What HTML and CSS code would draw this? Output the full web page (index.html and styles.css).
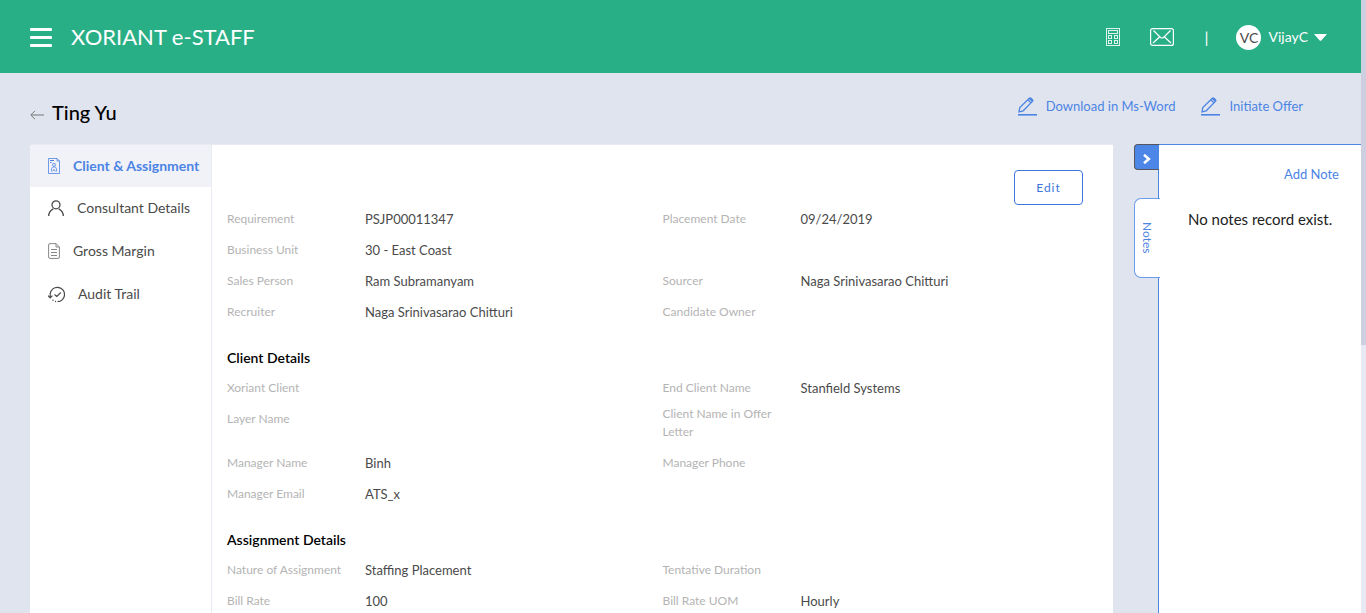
FILE: index.html
```html
<!DOCTYPE html>
<html lang="en">
<head>
<meta charset="utf-8">
<title>Xoriant e-Staff</title>
<link rel="stylesheet" href="styles.css">
</head>
<body>
<div class="page">
  <header class="topbar">
    <button class="menu-button" aria-label="Menu"><span></span><span></span><span></span></button>
    <a class="brand" href="#">XORIANT e-STAFF</a>
    <nav class="tools" aria-label="Tools">
      <a href="#" aria-label="Calculator">
        <svg width="14" height="18" viewBox="0 0 14 18" fill="none" stroke="currentColor" stroke-opacity=".85" shape-rendering="crispEdges"><path d="M.5.5h13v17H.5zM2.500 2.500h9v3h-9zM2.500 7.500h3v3h-3zM8.500 7.500h3v3h-3zM2.500 12.500h3v3h-3zM8.500 12.500h3v3h-3z"/></svg>
      </a>
      <a class="mail" href="#" aria-label="Mail">
        <svg width="24" height="18" viewBox="0 0 24 18" fill="none" stroke="currentColor" stroke-width="1.200"><rect x=".6" y=".6" width="22.800" height="16.800" rx="2"/><path d="M3.500 2.500l7 7q1.500 1 3 0l7-7M3 15l6.500-6M21 15l-6.500-6"/></svg>
      </a>
      <span class="divider">|</span>
      <button class="user">
        <span class="avatar">VC</span>
        <span>VijayC</span>
        <svg width="13" height="7" viewBox="0 0 13 7" fill="currentColor"><path d="M0 0h13L7.300 6.400q-.8.800-1.600 0z"/></svg>
      </button>
    </nav>
  </header>

  <div class="titlebar">
    <a class="back" href="#" aria-label="Back">
      <svg width="14" height="10" viewBox="0 0 14 10" fill="none" stroke="currentColor"><path d="M14 5H1M5 .8L.8 5 5 9.200"/></svg>
    </a>
    <h1>Ting Yu</h1>
    <div class="actions">
      <a href="#">
        <svg width="19" height="19" viewBox="0 0 19 19" fill="none" stroke="currentColor" stroke-width="1.300"><path d="M1 14.800l.8-4.300L11.300 1.300q.8-.7 1.600 0l1.500 1.500q.8.800 0 1.600L5.200 13.800zM9.800 2.800l3.100 3.100M11.500 1.500l2.700 2.700"/><path d="M0 17.800h19" stroke-width="1.600"/></svg>
        Download in Ms-Word</a>
      <a href="#">
        <svg width="19" height="19" viewBox="0 0 19 19" fill="none" stroke="currentColor" stroke-width="1.300"><path d="M1 14.800l.8-4.300L11.300 1.300q.8-.7 1.600 0l1.500 1.500q.8.800 0 1.600L5.200 13.800zM9.800 2.800l3.100 3.100M11.500 1.500l2.700 2.700"/><path d="M0 17.800h19" stroke-width="1.600"/></svg>
        Initiate Offer</a>
    </div>
  </div>

  <div class="content">
    <main class="card">
      <nav class="tabs" aria-label="Sections">
        <a class="active" href="#">
          <svg width="12" height="16" viewBox="0 0 12 16" fill="none" stroke="currentColor" stroke-width=".8"><path d="M.5.500h8.500l2.500 2.500v12.500H.5zM9 .5v2.500h2.500"/><circle cx="6" cy="6.800" r="1.500"/><path d="M3.300 13.500l.4-3.200q.3-1.300 2.300-1.500 2 .2 2.300 1.500l.4 3.200M4.600 13.500l1.400-2.200 1.400 2.200"/><path d="M2 2.500h4M2 4.500h1.500" stroke-width="1.200"/></svg>
          Client &amp; Assignment</a>
        <a href="#">
          <svg width="16" height="16" viewBox="0 0 16 16" fill="none" stroke="currentColor" stroke-width="1.300"><circle cx="8" cy="4.800" r="4"/><path d="M.7 16q0-4.800 4.600-7.200M15.300 16q0-4.800-4.600-7.200"/></svg>
          Consultant Details</a>
        <a href="#">
          <svg class="faint" width="12" height="16" viewBox="0 0 12 16" fill="none" stroke="currentColor"><path d="M2 .6h6l3.400 3.400v10q0 1.400-1.400 1.400H2Q.6 15.400.6 14V2Q.6.600 2 .6zM8 .6v3.400h3.400M3 6.500h6M3 9.500h6M3 12.500h6"/></svg>
          Gross Margin</a>
        <a href="#">
          <svg width="17" height="17" viewBox="0 0 17 17" fill="none" stroke="currentColor" stroke-width="1.200"><path d="M2.200 11.500V7.500A7.200 7.200 0 1 1 9.500 15.700M0 9.600l2.200 2.200 2.200-2.200M6.500 8.500l2.300 2 4-4M4.500 13.800l1 .8M7 15.400l1 .2"/></svg>
          Audit Trail</a>
      </nav>

      <div class="details">
        <div class="toolbar"><button class="edit">Edit</button></div>
        <section>
          <dl class="fields">
            <div><dt>Requirement</dt><dd>PSJP00011347</dd></div>
            <div><dt>Placement Date</dt><dd>09/24/2019</dd></div>
            <div><dt>Business Unit</dt><dd>30 - East Coast</dd></div>
            <div></div>
            <div><dt>Sales Person</dt><dd>Ram Subramanyam</dd></div>
            <div><dt>Sourcer</dt><dd>Naga Srinivasarao Chitturi</dd></div>
            <div><dt>Recruiter</dt><dd>Naga Srinivasarao Chitturi</dd></div>
            <div><dt>Candidate Owner</dt><dd></dd></div>
          </dl>
        </section>
        <section>
          <h2>Client Details</h2>
          <dl class="fields">
            <div><dt>Xoriant Client</dt><dd></dd></div>
            <div><dt>End Client Name</dt><dd>Stanfield Systems</dd></div>
            <div><dt>Layer Name</dt><dd></dd></div>
            <div class="two-line"><dt>Client Name in Offer Letter</dt><dd></dd></div>
            <div><dt>Manager Name</dt><dd>Binh</dd></div>
            <div><dt>Manager Phone</dt><dd></dd></div>
            <div><dt>Manager Email</dt><dd>ATS_x</dd></div>
            <div></div>
          </dl>
        </section>
        <section>
          <h2>Assignment Details</h2>
          <dl class="fields">
            <div><dt>Nature of Assignment</dt><dd>Staffing Placement</dd></div>
            <div><dt>Tentative Duration</dt><dd></dd></div>
            <div><dt>Bill Rate</dt><dd>100</dd></div>
            <div><dt>Bill Rate UOM</dt><dd>Hourly</dd></div>
          </dl>
        </section>
      </div>
    </main>

    <aside class="notes">
      <div class="handles">
        <button class="collapse" aria-label="Collapse notes">
          <svg width="8" height="10" viewBox="0 0 8 10" fill="none" stroke="currentColor" stroke-width="2.600"><path d="M1 .8L5.800 5 1 9.200"/></svg>
        </button>
        <button class="notes-tab">Notes</button>
      </div>
      <div class="notes-body">
        <a href="#">Add Note</a>
        <p>No notes record exist.</p>
      </div>
    </aside>
  </div>
</div>
<div class="scrollbar"><div class="thumb"></div></div>
</body>
</html>
```

FILE: styles.css
```css
* { box-sizing: border-box; }

body {
  margin: 0;
  height: 100vh;
  display: flex;
  overflow: hidden;
  background: #e0e4ef;
  color: #4a4a4a;
  font: 14px/18px Lato, "Liberation Sans", sans-serif;
}

h1, h2, p, dl, dd { margin: 0; }
a { color: inherit; text-decoration: none; }
svg { display: block; flex: none; }
button {
  font: inherit;
  color: inherit;
  background: none;
  border: 0;
  padding: 0;
  cursor: pointer;
}

.page {
  flex: 1;
  min-width: 0;
  display: flex;
  flex-direction: column;
}

.scrollbar { width: 5px; background: #e9e9f3; }
.thumb { height: 56.3%; background: #cdcedf; }

.topbar {
  flex: none;
  height: 73px;
  padding: 1px 34px 0 30px;
  display: flex;
  align-items: center;
  background: #29af86;
  color: #fff;
}

.menu-button {
  display: flex;
  flex-direction: column;
  gap: 5px;
  width: 22px;
  margin-right: 19px;
}
.menu-button span { height: 3px; background: #fff; border-radius: 1px; }

.brand { font-size: 22px; line-height: 28px; }

.tools { margin-left: auto; display: flex; align-items: center; }
.mail { margin: 0 30px; }
.divider { margin-right: 28px; font-size: 16px; }

.user { display: flex; align-items: center; gap: 7px; }
.user svg { margin-left: -1px; }
.avatar {
  width: 25px;
  height: 25px;
  border-radius: 50%;
  background: #fff;
  color: #4a4a4a;
  line-height: 25px;
}

.titlebar {
  flex: none;
  height: 71px;
  padding: 0 58px 0 30px;
  display: flex;
  align-items: center;
}
.back { margin-right: 8px; padding-top: 12px; color: #777; }
h1 {
  padding-top: 6px;
  color: #000;
  font-size: 20px;
  line-height: 26px;
  font-weight: 500;
}
.actions {
  margin-left: auto;
  padding-bottom: 5px;
  display: flex;
  gap: 26px;
  color: #4c84e4;
  font-size: 13px;
}
.actions a { display: flex; align-items: center; gap: 9px; }

.content { flex: 1; min-height: 0; display: flex; padding-left: 30px; }

.card {
  flex: 1;
  min-width: 0;
  margin-right: 21px;
  display: flex;
  background: #fff;
  border-top: 1px solid #e9ebf2;
  border-radius: 4px 0 0 0;
}

.tabs { width: 182px; flex: none; border-right: 1px solid #e9ebf2; }
.tabs a {
  height: 43px;
  padding: 0 0 1px 18px;
  display: flex;
  align-items: center;
  gap: 13px;
}
.tabs .active {
  height: 42px;
  background: #f1f2f8;
  color: #4c84e4;
  font-weight: bold;
}
.faint { color: #888; }

.details { flex: 1; min-width: 0; padding: 25px 15px 0; }
.toolbar { display: flex; justify-content: flex-end; padding-right: 15px; }
.edit {
  width: 69px;
  height: 35px;
  border: 1px solid #3b76dd;
  border-radius: 4px;
  color: #3b76dd;
  font-size: 12px;
  letter-spacing: 1px;
}

h2 {
  padding: 20px 0 7px;
  color: #000;
  font-size: 14px;
  line-height: 18px;
  font-weight: 600;
}

.fields { display: grid; grid-template-columns: 1fr 1fr; }
.fields > div { display: flex; padding-bottom: 8px; }
.fields dt {
  width: 138px;
  flex: none;
  padding: 5px 15px 0 0;
  color: #b4b4b4;
  font-size: 12px;
}
.fields .two-line dt { padding-top: 0; }
.fields dd { padding-top: 5px; font-size: 13px; }

.notes { display: flex; width: 227px; flex: none; }
.handles {
  width: 25px;
  z-index: 1;
  margin-right: -1px;
  display: flex;
  flex-direction: column;
  gap: 28px;
}
.collapse {
  height: 26px;
  display: flex;
  align-items: center;
  justify-content: center;
  padding-top: 4px;
  background: #4c86e6;
  color: #fff;
  border: 1px solid #55555c;
  border-right: 0;
  border-radius: 4px 0 0 4px;
}
.notes-tab {
  width: 26px;
  height: 80px;
  padding-right: 2px;
  writing-mode: vertical-rl;
  background: #fff;
  border: 1px solid #6c9cec;
  border-right: 0;
  border-radius: 7px 0 0 7px;
  color: #4c84e4;
  font-size: 12px;
}
.notes-body {
  flex: 1;
  padding: 20px 22px 0 29px;
  background: #fff;
  border-top: 1px solid #4c84e4;
  border-left: 1px solid #4c84e4;
  color: #222;
}
.notes-body a { display: block; text-align: right; color: #4c84e4; font-size: 13px; }
.notes-body p { margin-top: 27px; font-size: 15px; white-space: nowrap; }
```
